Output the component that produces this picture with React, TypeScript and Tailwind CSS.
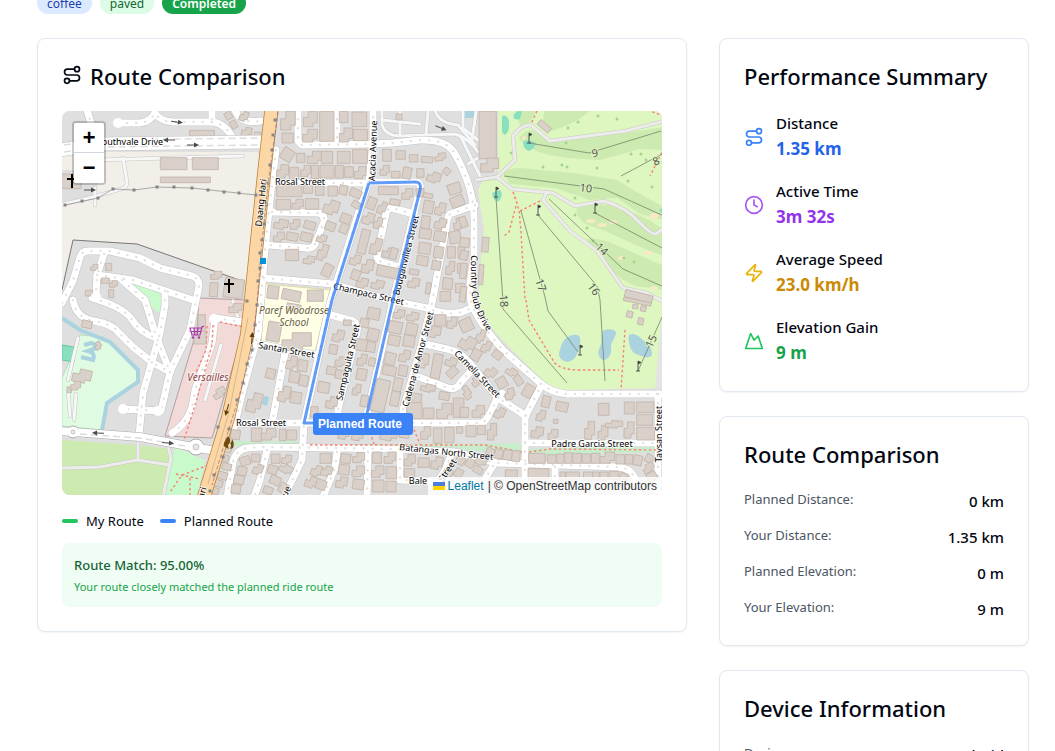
import React from 'react';
import { Clock, Mountain, Route, Zap } from 'lucide-react';

/* ---------- map data ---------- */

type Tile = { x: number; y: number; buildings: string };

// Each building: x y width height rotation corner-cut, in thirds of a pixel from the tile origin.
const tiles: Tile[] = [
  {
    x: 60,
    y: 108,
    buildings:
      '301 149 80 36 0 0;397 149 78 36 0 0;301 207 150 17 0 0;389 67 74 17 0 0;5 198 58 44 0 0;92 469 22 18 0 1;137 466 18 22 0 0;76 547 22 17 0 0;124 510 24 16 0 0;148 518 24 20 0 1;146 545 15 24 0 0;449 524 24 42 4 0;452 490 34 24 0 1;492 512 58 58 8 0;495 12 20 22 -30 0;512 38 18 24 -30 0;540 10 24 30 20 1;545 58 30 26 12 1;583 72 20 20 0 0',
  },
  {
    x: 260,
    y: 108,
    buildings:
      '62 10 44 56 0 1;66 75 34 30 0 0;130 10 42 46 0 1;128 64 44 38 0 1;179 10 43 90 0 0;238 10 26 34 0 0;276 12 44 44 0 0;238 60 40 42 0 1;280 64 42 34 0 0;64 122 36 36 32 0;109 136 26 28 0 0;142 130 44 36 0 1;184 130 34 36 0 0;232 130 38 36 0 0;278 124 44 42 0 0;50 170 36 40 0 1;88 178 28 36 0 0;122 172 30 34 0 1;154 172 22 40 0 0;180 172 42 38 0 0;226 172 24 38 0 0;254 176 26 32 0 0;284 176 34 36 0 1;' +
      '368 124 26 36 0 0;408 128 28 26 0 0;448 140 26 22 0 0;484 146 34 18 4 0;524 136 34 22 -8 1;360 172 28 30 0 1;394 190 26 20 0 0;428 178 26 34 12 0;470 182 22 26 0 0;502 192 40 32 20 1;355 236 60 24 0 0;425 242 34 32 0 1;468 242 24 24 0 0;490 256 28 14 10 0;50 232 76 34 0 0;130 232 28 24 0 0;166 234 26 28 0 0;204 234 28 30 0 0;238 232 24 28 12 0;270 244 34 24 24 0;48 274 44 32 0 0;96 274 34 30 0 1;136 272 40 32 0 0;192 276 44 44 18 1;276 280 24 20 30 0;322 268 26 36 20 0;390 274 30 18 10 0;354 280 24 38 22 1;' +
      '42 334 42 30 10 1;90 334 30 30 0 1;132 340 34 24 16 0;40 372 34 30 0 1;80 374 34 24 10 0;122 374 34 26 12 0;242 318 30 28 22 0;240 346 24 30 22 0;196 342 30 26 20 0;170 380 30 24 16 1;308 314 34 36 18 1;342 328 24 34 14 1;298 364 26 74 14 0;332 390 32 50 14 1;174 408 28 50 16 1;76 424 40 34 0 0;130 444 34 24 8 1;188 468 28 38 26 0;270 440 32 32 16 1;306 454 34 42 10 1;350 476 70 32 12 0;368 420 40 30 12 1;390 420 22 34 16 0;448 484 28 16 10 0;274 486 26 30 20 0;290 510 34 30 12 1;334 516 38 28 14 1;444 510 34 30 10 1;' +
      '490 278 30 38 10 0;526 284 30 38 12 1;484 324 26 38 8 0;524 330 34 34 14 1;478 362 36 30 8 0;522 370 36 30 10 0;476 404 36 34 8 0;522 416 28 34 8 0;470 444 34 28 10 0;516 458 26 28 10 0;550 180 20 20 40 0;564 226 38 32 -18 0;572 264 40 32 -22 0;580 330 30 34 -10 1;568 370 34 36 -10 0;562 416 24 34 0 0;594 416 20 34 0 0;558 460 26 40 4 1;592 466 20 30 0 0;548 510 30 34 6 0;586 526 28 28 0 0;22 534 34 38 6 0;66 546 56 32 12 0;142 546 48 34 0 0;408 18 18 18 0 0;540 550 32 30 0 0;498 524 14 34 10 0',
  },
  {
    x: 460,
    y: 108,
    buildings:
      '57 10 52 142 0 0;62 150 54 42 0 1;232 46 42 18 40 0;0 326 20 32 -20 0;0 390 28 28 6 0;0 428 24 28 12 0;0 466 20 46 6 0;66 388 20 44 4 0;56 470 14 60 4 0;494 554 84 22 14 0;0 536 18 46 8 0',
  },
  {
    x: 60,
    y: 300,
    buildings:
      '66 62 30 22 12 0;38 208 56 40 12 1;104 126 20 22 -30 1;22 262 12 16 0 0;32 244 30 26 0 1;414 44 22 68 0 0;402 94 36 38 0 0;506 10 40 28 0 1;458 266 40 26 -30 1;562 278 42 60 14 1;512 390 28 28 8 0;574 384 32 40 0 0;492 440 22 18 16 0;482 464 24 20 16 0;486 490 28 20 16 0;474 516 28 22 16 0;462 540 26 20 16 0;448 562 28 20 16 0;540 470 30 26 -18 0;532 500 28 26 10 0;522 526 30 26 10 0;514 554 28 26 10 0;574 462 26 24 0 0;580 492 28 32 20 1',
  },
  {
    x: 260,
    y: 300,
    buildings:
      '22 66 40 58 10 0;66 98 88 54 0 1;80 12 42 22 10 0;80 168 30 40 12 1;114 180 28 34 10 0;88 214 30 34 10 0;118 226 26 32 10 0;56 258 34 48 12 1;92 276 32 34 10 0;18 206 28 30 14 0;218 90 34 36 12 1;208 134 24 28 10 0;226 170 30 30 12 1;200 200 28 24 10 0;174 246 34 32 10 0;226 210 26 26 10 0;198 290 34 36 10 1;250 60 24 16 0 0;' +
      '322 24 38 34 12 0;300 56 26 26 12 0;288 118 34 34 10 0;322 86 34 36 14 0;320 126 26 30 10 0;292 162 28 36 10 1;290 206 30 34 10 0;326 174 20 24 12 0;278 252 24 34 10 1;302 286 22 34 10 0;400 28 34 28 10 1;440 36 36 28 12 1;386 64 40 36 12 0;438 70 34 36 12 0;384 106 36 30 12 0;430 106 34 34 10 0;374 158 32 36 14 0;418 150 32 36 12 1;368 198 40 28 12 0;416 196 26 32 10 0;340 238 42 98 13 0;400 234 26 40 12 0;392 274 26 44 12 0;' +
      '524 44 34 34 0 0;562 50 28 36 10 1;498 78 44 34 10 1;516 162 28 74 10 0;556 172 34 28 20 1;482 252 44 24 14 1;538 276 30 24 10 0;476 160 30 44 8 1;448 280 36 36 8 0;560 204 34 26 -44 0;440 308 46 48 0 0;490 324 32 32 0 0;530 310 46 46 0 1;580 294 32 58 0 0;362 380 50 42 12 1;420 384 28 30 10 0;482 380 30 38 0 1;520 384 26 46 0 0;554 382 28 46 0 0;590 380 18 20 0 0;4 386 44 34 0 1;58 388 20 34 0 0;80 390 30 30 0 0;152 320 22 32 0 0;236 378 32 40 10 1;276 388 34 34 10 1;' +
      '34 462 26 28 0 0;66 464 28 28 10 1;24 496 28 26 14 0;58 494 40 26 30 1;30 528 32 26 24 0;58 550 26 30 30 0;10 560 28 22 20 0;180 460 34 30 0 0;154 496 32 34 20 1;136 530 36 34 20 1;184 498 32 30 16 1;168 540 30 28 20 0;242 462 30 28 8 0;278 458 36 30 0 1;236 494 32 30 8 0;276 498 38 32 0 1;228 530 34 34 10 1;278 538 34 30 8 0;338 456 26 34 0 0;372 456 36 34 0 1;334 498 38 34 0 1;378 500 32 36 0 0;338 540 34 36 0 0;378 544 30 32 0 0;432 464 34 34 0 1;474 474 34 28 0 0;514 470 34 38 10 1;432 506 32 26 0 0;550 506 28 26 28 1;588 470 26 24 30 0;584 506 24 26 30 0',
  },
  {
    x: 460,
    y: 300,
    buildings:
      '0 56 38 38 -24 0;50 88 24 42 20 1;0 108 46 44 30 1;34 148 28 34 30 0;66 122 26 36 24 1;98 152 28 24 36 0;76 200 32 34 42 1;110 232 30 32 -30 0;138 204 34 24 32 1;164 226 22 30 -34 0;134 266 30 32 -14 1;190 254 30 38 30 0;34 232 26 26 -34 1;8 258 24 40 -36 1;104 322 30 34 26 1;0 322 26 30 0 0;36 316 38 36 0 1;18 376 30 34 0 0;52 376 24 28 0 0;82 370 28 50 0 1;246 288 24 34 14 0;288 306 36 28 12 0;230 330 26 34 12 1;214 380 36 34 8 1;280 358 14 12 0 0;264 388 30 30 0 1;415 310 32 36 0 0;493 306 30 36 0 0;530 306 52 32 0 0;530 344 48 32 0 0;530 382 54 38 0 0;374 364 30 54 0 1;414 376 30 44 0 1;436 362 52 22 4 1;492 366 30 48 0 1;' +
      '206 460 50 30 0 0;262 464 26 26 0 0;290 462 22 28 0 0;314 458 22 32 0 0;338 460 26 30 0 0;366 462 26 28 0 0;394 460 26 30 0 0;420 456 44 34 0 1;468 464 26 28 0 0;496 464 22 28 0 0;520 466 26 30 10 0;556 464 24 24 30 0;548 492 34 24 -30 1;562 516 28 26 -30 0;204 506 62 34 0 0;300 516 16 24 0 0;318 516 40 24 0 0;370 516 28 24 0 0;398 516 20 24 0 0;420 516 24 24 0 0;448 514 28 24 0 0;480 520 24 18 20 0;78 444 24 26 24 0;104 448 24 28 14 0;130 450 26 30 10 0;156 452 24 32 4 0;46 470 34 26 28 1;18 476 24 26 30 0;40 500 28 20 30 0;136 510 36 22 0 0;490 0 84 10 12 0;500 34 18 18 16 0;518 14 16 12 0 0;534 54 16 20 12 0;542 18 16 16 14 0;88 540 40 24 0 0',
  },
];

function buildingShape(spec: string, key: number) {
  const [x, y, w, h, r, cut] = spec.split(' ').map(Number);
  const d = cut
    ? `M${x} ${y + h * 0.4}h${w * 0.35}v${-h * 0.4}h${w * 0.65}v${h * 0.75}h${-w * 0.3}v${h * 0.25}h${-w * 0.7}z`
    : `M${x} ${y}h${w}v${h}h${-w}z`;
  return <path key={key} d={d} transform={`rotate(${r} ${x + w / 2} ${y + h / 2})`} />;
}

const streets = [
  'M270 183H369',
  'M373 108V142L369 180L330 303L304 423L302 460L284 497',
  'M298 110V141L302 145L373 144L393 143L420 140Q447 139 455 154Q474 188 474 218L474 258Q468 288 471 302Q478 322 503 350L540 383Q552 393 567 394H664',
  'M337 110V144',
  'M272 212L318 213Q325 214 324 222L315 244Q313 249 306 248L268 245',
  'M414 214L392 208Q387 208 386 214L377 256Q377 261 382 262L400 267',
  'M369 182L415 182Q421 182 420 188L393 300L367 415V423',
  'M264 278L333 284L393 301L427 308Q445 316 462 312L474 307',
  'M475 205L450 214Q447 217 446 228L432 303L420 350L403 410L402 423',
  'M327 314L353 321Q359 324 357 332L338 410V423',
  'M240 423H483Q490 416 497 398L502 393',
  'M425 344L447 349Q460 352 468 361L497 397L526 416',
  'M419 377L448 388Q456 391 461 382L474 368',
  'M525 497V417L541 386',
  'M525 443H660',
  'M227 497L233 462Q236 450 247 448L265 447L400 449L455 452L497 463L618 467Q631 468 636 480L640 497',
  'M658 394V497',
  'M337 452L335 468L323 497',
  'M368 452L367 497',
  'M400 450V480L430 481',
  'M267 450L260 480L254 497',
  'M452 453L444 472L436 484',
  'M493 466L478 490',
  'M555 467V497',
  'M258 344L316 355',
  'M285 353L272 423',
  'M276 150L270 200L264 260L261 300L258 335L243 390L234 428',
  'M118 123H140Q150 122 155 113Q160 121 172 122L213 122Q226 124 233 139',
  'M212 110V122',
  'M87 110L93 130',
  'M235 110Q240 124 261 121',
  'M62 303L73 281L80 257Q82 251 88 251L110 251L140 258L160 268L192 276Q199 278 199 286L190 330L170 372L161 411L122 409',
  'M104 254L97 275L96 296',
  'M97 275L133 280L193 300',
  'M122 280L145 300L156 336L170 372',
  'M165 291V305L160 333L143 393L139 436',
  'M73 300Q76 318 94 321Q112 324 118 332L133 347L153 363L170 372',
  'M92 298Q120 306 130 317Q140 333 156 338',
  'M243 322L215 318L212 343L195 390L193 403Q189 422 172 433',
];

const serviceRoads = [
  'M97 160L243 156',
  'M123 158L127 182Q127 188 121 189L97 196L60 205',
  'M95 188V205',
  'M382 111V125Q386 136 400 136L455 134Q470 139 478 152',
  'M400 112V134M428 112L426 134M382 120L420 124M435 110Q438 123 458 125L475 145',
  'M463 111V128L478 140M476 112L472 140M460 135L480 176M484 154L468 164M478 180L499 177',
  'M78 338L68 380M68 388L70 416M76 394L74 420',
  'M233 301L238 318M221 345L205 400',
];

const golfPaths = [
  'M498 176L515 160L513 136Q522 124 531 125L550 141L626 131L664 121',
  'M476 180L497 177L512 189L553 193L575 206L604 201Q626 207 640 223Q652 235 656 234L664 228',
  'M547 192L543 200L570 231L597 251L623 288L647 293L664 302',
  'M60 468L100 467L137 460L170 465',
  'M138 440V460',
  'M168 446L171 458L163 497',
];

const redPaths =
  'M537 111L531 124M513 192L519 210L521 232L525 300M513 192L517 202L509 232L504 236M520 211L542 200M526 300L529 320L554 362Q560 370 580 370H619M625 330L621 390M664 148L650 176M664 116L650 111M222 460L182 475L170 492M190 478V495M176 474L200 479M220 322L243 327M213 325L212 345L196 402L184 440M207 326L206 350L196 372M367 423L374 444M412 425L420 444';

const holes = [
  'M529 143L589 153L661 131',
  'M504 176L604 189L664 216',
  'M496 197L503 302L503 309L567 383',
  'M538 215L597 286L600 300L605 381',
  'M521 211L545 297L548 311L578 352',
  'M549 199L623 269L664 287',
  'M595 213L664 249',
  'M621 176L664 153',
  'M662 317L638 371',
];

const flags = [
  [529, 143],
  [496, 197],
  [538, 215],
  [595, 213],
  [580, 355],
  [638, 371],
];

const trees = [
  [578, 122], [598, 116], [568, 128], [566, 143], [511, 153], [543, 167], [562, 165], [567, 167], [597, 168],
  [631, 154], [641, 154], [646, 160], [628, 181], [652, 187], [575, 215], [587, 228], [593, 241], [624, 258],
  [634, 262], [575, 198], [617, 119],
];

const poles = [
  [65, 205], [82, 201], [98, 198], [113, 189], [134, 190], [157, 187], [174, 187], [192, 188], [208, 190],
  [224, 192], [239, 193], [256, 195],
];

const linePoles = [
  [275, 120], [273, 135], [272, 150], [270, 165], [267, 183], [266, 205], [264, 224], [262, 240], [260, 253],
  [260, 268], [258, 281], [247, 301], [257, 305], [255, 325], [252, 350], [247, 364], [243, 383], [237, 400],
  [229, 429], [218, 427], [226, 445], [223, 457], [214, 475], [210, 491],
];

const holeLabels: [string, number, number, number][] = [
  ['9', 595, 157, -10],
  ['8', 656, 165, -24],
  ['10', 586, 192, 6],
  ['14', 602, 253, 42],
  ['16', 594, 293, 55],
  ['17', 541, 289, 72],
  ['18', 504, 305, 86],
  ['15', 651, 345, -66],
];

const halo = { paintOrder: 'stroke' as const };

function StreetLabel({ x, y, r = 0, children }: { x: number; y: number; r?: number; children: string }) {
  return (
    <text
      x={x}
      y={y}
      transform={`rotate(${r} ${x} ${y})`}
      textAnchor="middle"
      fontSize="9"
      fill="#000"
      stroke="#fff"
      strokeOpacity="0.7"
      strokeWidth="2"
      style={halo}
    >
      {children}
    </text>
  );
}

function Arrow({ x, y, r = 0, color = '#4b4b4b' }: { x: number; y: number; r?: number; color?: string }) {
  return (
    <g transform={`translate(${x} ${y}) rotate(${r})`} fill={color} stroke={color}>
      <path d="M-6 0H3" strokeWidth="1" />
      <path d="M1 -2.5L6 0L1 2.5z" stroke="none" />
    </g>
  );
}

function MapDrawing() {
  return (
    <svg
      viewBox="62 111 600 384"
      preserveAspectRatio="xMidYMid slice"
      className="block size-full font-['Noto_Sans',sans-serif]"
      role="img"
      aria-label="Street map with the planned route"
    >
      <rect x="62" y="111" width="600" height="384" fill="#dfdfdf" />

      {/* land use */}
      <path d="M62 204V152H258L260 160L247 283L137 244L73 240L62 290z" fill="#f2efe9" />
      <path d="M62 170H98L97 195L62 203z" fill="#dedede" />
      <path d="M62 290L73 240L137 244L245 282" fill="none" stroke="#777" strokeWidth="1" />
      <path d="M199 298L246 300L242 335L212 438L165 436L197 330z" fill="#f2dad9" stroke="#a08484" strokeWidth="0.7" />
      <path d="M80 335L103 337L120 353L137 370V382L107 402L102 430L62 426V378L70 360z" fill="#dffce2" stroke="#9bd8a2" strokeWidth="0.6" />
      <path d="M125 280L161 291V303L146 297z" fill="#c8facc" />
      <path d="M148 298H163V316L150 306z" fill="#c8facc" />
      <path d="M62 440L138 445L171 449L163 495H62z" fill="#cdebb0" />
      <path d="M175 447L205 460L203 470L197 495H163z" fill="#c8facc" />
      <path d="M265 284L330 290L315 352L261 342z" fill="#ffffe5" stroke="#d9d68d" strokeWidth="0.7" />
      <path d="M230 441H298V446H230zM308 444H450L521 443V451H470L450 447H308zM528 449L660 444V452L528 456z" fill="#c8eccc" />
      <path d="M62 318L80 330L110 342L138 370V382L107 403L102 430" fill="none" stroke="#aad3df" strokeWidth="4" />
      <path d="M62 345L74 347V362L62 360z" fill="#88e0be" stroke="#68c39e" />
      <path d="M84 345L91 343Q97 344 94 349L88 351Q96 353 93 360L81 357" fill="none" stroke="#aad3df" strokeWidth="4" />

      {/* golf course */}
      <path
        d="M498 111H662V388L565 390Q550 388 540 378L510 348Q478 316 478 300L481 260L484 230L478 190L484 178L498 175z"
        fill="#def6c0"
      />
      <path d="M662 310V388H655z" fill="#e4e4e4" />
      <g fill="#cdebb0">
        <path d="M503 173Q510 166 530 169L573 173L617 180L640 194L664 207V220L640 214L617 198L590 200L555 188L510 184z" />
        <path d="M519 138Q528 126 536 132L550 143L626 133L664 127V150L640 149L600 160L568 158Q530 154 519 138z" />
        <path d="M576 209Q590 203 610 205Q640 212 664 230V256Q640 248 610 233L584 223Q577 217 576 209z" />
        <path d="M586 239Q600 236 625 249L664 266V290L636 286Q620 281 604 262z" />
        <path d="M545 111H590Q580 120 563 127L548 132Q540 120 545 111z" />
        <path d="M515 111H536L530 122L521 128z" />
      </g>
      <g fill="#f5e9c6">
        <ellipse cx="591" cy="221" rx="5" ry="2" />
        <ellipse cx="602" cy="225" rx="5" ry="2" />
        <ellipse cx="613" cy="222" rx="4" ry="2" />
        <ellipse cx="654" cy="216" rx="5" ry="3" />
        <ellipse cx="622" cy="258" rx="4" ry="2" />
        <ellipse cx="648" cy="253" rx="5" ry="2" />
        <ellipse cx="654" cy="288" rx="4" ry="2" />
        <ellipse cx="524" cy="138" rx="2" ry="2" />
      </g>
      <g fill="#88e0be">
        <path d="M502 116Q508 114 509 122Q510 132 505 135Q501 134 502 125z" />
        <path d="M514 114Q520 109 522 112L520 119Q512 121 514 114z" />
        <path d="M523 142Q528 138 536 143Q535 148 529 151Q523 149 523 142z" />
        <path d="M492 193L500 190Q504 195 499 201Q494 203 492 193z" />
        <path d="M659 210L664 207V216z" />
      </g>
      <g fill="#aad3df">
        <path d="M560 350C562 338 571 334 577 335C582 337 580 342 579 349C577 358 570 364 564 361C559 359 558 354 560 350z" />
        <path d="M603 331C607 328 614 329 616 332C616 338 611 341 611 347C612 356 607 360 603 360C598 358 597 352 600 347C603 341 600 336 603 331z" />
        <path d="M629 335C634 332 639 336 644 341C650 345 652 349 652 355C649 360 641 356 634 353C629 348 628 340 629 335z" />
        <rect x="464" y="111" width="11" height="7" />
        <path d="M264 396L269 397L267 406L262 404z" />
      </g>
      <g fill="#a5d58c">
        {trees.map(([x, y]) => (
          <circle key={`${x}-${y}`} cx={x} cy={y} r="1.5" />
        ))}
      </g>

      {/* roads */}
      <g fill="none" strokeLinecap="round" strokeLinejoin="round">
        {serviceRoads.map((d) => (
          <path key={d} d={d} stroke="#c4c4c4" strokeWidth="4" />
        ))}
        {serviceRoads.map((d) => (
          <path key={`f${d}`} d={d} stroke="#f7f7f7" strokeWidth="3" />
        ))}
        {golfPaths.map((d) => (
          <path key={d} d={d} stroke="#c9c9c0" strokeWidth="4" />
        ))}
        {golfPaths.map((d) => (
          <path key={`f${d}`} d={d} stroke="#ececec" strokeWidth="3" />
        ))}
        {streets.map((d) => (
          <path key={d} d={d} stroke="#c2c2c2" strokeWidth="8" />
        ))}
        {streets.map((d) => (
          <path key={`f${d}`} d={d} stroke="#fff" strokeWidth="7" />
        ))}
        {streets.map((d) => (
          <path key={`d${d}`} d={d} stroke="#e2e2e2" strokeWidth="2.4" strokeDasharray="0.1 9" />
        ))}
        <path d={redPaths} stroke="#fa8072" strokeWidth="1.4" strokeDasharray="2.5 2.5" strokeLinecap="butt" />
        <path d="M310 445H455L485 445L522 452M529 452L550 449L662 450" stroke="#fa8072" strokeWidth="1.4" strokeDasharray="2.5 2.5" strokeLinecap="butt" />
      </g>

      {/* buildings */}
      {tiles.map((tile) => (
        <g
          key={`${tile.x}-${tile.y}`}
          transform={`translate(${tile.x} ${tile.y}) scale(0.33333)`}
          fill="#d9d0c9"
          stroke="#c4b6ab"
          strokeWidth="2.6"
        >
          {tile.buildings.split(';').map(buildingShape)}
        </g>
      ))}

      {/* through roads */}
      <g fill="none" strokeLinejoin="round">
        <path d="M60 150L100 144L262 142" stroke="#c2c2c2" strokeWidth="14" />
        <path d="M60 150L100 144L264 142" stroke="#fff" strokeWidth="13" />
        <path d="M64 145L100 140L262 138M64 152L100 147L262 145" stroke="#ddd" strokeWidth="1.5" strokeDasharray="7 4" />
        <path d="M60 431L73 432L140 437L193 447L216 451" stroke="#a9a9a9" strokeWidth="9" />
        <circle cx="73" cy="432" r="6" fill="#fff" stroke="#a9a9a9" />
        <circle cx="196" cy="447" r="8" fill="#fff" stroke="#a9a9a9" />
        <path d="M60 431L73 432L140 437L193 447L216 451" stroke="#fff" strokeWidth="8" />
        <path d="M80 434L140 438L185 446" stroke="#ddd" strokeWidth="1.5" strokeDasharray="7 4" />
        <circle cx="73" cy="432" r="2" fill="#e7e7e7" stroke="#aaa" strokeWidth="0.6" />
        <circle cx="196" cy="447" r="3" fill="#e7e7e7" stroke="#aaa" strokeWidth="0.6" />
        <g fill="#fff" stroke="none">
          <circle cx="118" cy="123" r="5" />
          <circle cx="123" cy="409" r="5" />
          <circle cx="158" cy="411" r="5" />
          <circle cx="96" cy="297" r="5" />
          <circle cx="214" cy="319" r="5" />
        </g>
        <path d="M272 105L265 165L257 241L251 300L247 335L228 418L203 500" stroke="#b5812f" strokeWidth="14" />
        <path d="M272 105L265 165L257 241L251 300L247 335L228 418L203 500" stroke="#fcd6a4" strokeWidth="12.5" />
        <path d="M248 318L229 412L208 484" stroke="#bda27c" strokeWidth="0.6" />
        <path d="M278 112L268 185L261 252L257 303L252 350L238 400L228 432L212 485" stroke="#8d6c8d" strokeWidth="0.7" strokeDasharray="4 2" />
        <path d="M65 205L98 198L113 189L134 190L157 187L192 188L256 195" stroke="#888" strokeWidth="0.7" />
      </g>
      <g fill="#858585">
        {[...poles, ...linePoles].map(([x, y]) => (
          <rect key={`${x}-${y}`} x={x - 1.5} y={y - 1.5} width="3" height="3" />
        ))}
      </g>

      {/* golf holes */}
      <g fill="none" stroke="#77846a" strokeWidth="0.8">
        {holes.map((d) => (
          <path key={d} d={d} />
        ))}
      </g>
      <g fill="#444" stroke="#444" strokeWidth="0.9">
        {flags.map(([x, y]) => (
          <path key={`${x}-${y}`} d={`M${x - 2} ${y}h4M${x} ${y}v-10l3 1.5l-3 1.5`} />
        ))}
      </g>
      <g fontSize="11" fill="#555" textAnchor="middle" stroke="#def6c0" strokeWidth="2">
        {holeLabels.map(([label, x, y, r]) => (
          <text key={label} x={x} y={y} transform={`rotate(${r} ${x} ${y - 4})`} style={halo}>
            {label}
          </text>
        ))}
      </g>

      {/* points of interest */}
      <g stroke="#000" strokeWidth="2" fill="none">
        <path d="M229 279V293M224 284H234" />
        <path d="M72 174V188M67 179H77" />
      </g>
      <g fill="none" stroke="#ac39ac" strokeWidth="1.2">
        <path d="M204 326L202 327L200 335H192L190 328H202M191 331.5H201M194 328L195 335M198 328L197 335" />
        <circle cx="193" cy="337.5" r="0.7" />
        <circle cx="199" cy="337.5" r="0.7" />
      </g>
      <path d="M228 436Q232 440 229 444Q227 446 229 449Q221 446 225 441Q227 438 228 436zM232 439Q235 443 233 448L230 449Q232 445 230 443Q232 442 232 439z" fill="#734a08" />
      <rect x="260" y="258" width="6" height="6" fill="#0092da" />
      <Arrow x={177} y={122} r={8} />
      <Arrow x={169} y={140} r={180} />
      <Arrow x={193} y={145} />
      <Arrow x={90} y={190} />
      <Arrow x={441} y={128} r={22} />
      <Arrow x={98} y={433} r={182} />
      <Arrow x={168} y={443} r={4} />
      <Arrow x={252} y={338} r={-86} color="#5b3a00" />
      <Arrow x={227} y={410} r={106} color="#5b3a00" />

      {/* street names */}
      <StreetLabel x={130} y={145}>Southvale Drive</StreetLabel>
      <StreetLabel x={264} y={203} r={-84}>Daang Hari</StreetLabel>
      <StreetLabel x={200} y={511} r={-74}>Daang Hari</StreetLabel>
      <StreetLabel x={300} y={185}>Rosal Street</StreetLabel>
      <StreetLabel x={376} y={151} r={-88}>Acacia Avenue</StreetLabel>
      <StreetLabel x={409} y={256} r={-76}>Bouganvillea Street</StreetLabel>
      <StreetLabel x={368} y={297} r={13}>Champaca Street</StreetLabel>
      <StreetLabel x={351} y={363} r={-77}>Sampaguita Street</StreetLabel>
      <StreetLabel x={421} y={360} r={-75}>Cadena de Amor Street</StreetLabel>
      <StreetLabel x={286} y={353} r={10}>Santan Street</StreetLabel>
      <StreetLabel x={261} y={426}>Rosal Street</StreetLabel>
      <StreetLabel x={475} y={376} r={46}>Camella Street</StreetLabel>
      <StreetLabel x={446} y={455} r={6}>Batangas North Street</StreetLabel>
      <StreetLabel x={592} y={447}>Padre Garcia Street</StreetLabel>
      <StreetLabel x={662} y={434} r={-90}>Taysan Street</StreetLabel>
      <StreetLabel x={418} y={484}>Bale</StreetLabel>
      <StreetLabel x={450} y={472} r={-56}>Street</StreetLabel>
      <StreetLabel x={284} y={502} r={-62}>Avenue</StreetLabel>
      <path id="country-club" d="M471 255Q471 282 472 296Q475 313 490 336" fill="none" />
      <text fontSize="9" fill="#000" stroke="#fff" strokeWidth="2" strokeOpacity="0.7" style={halo}>
        <textPath href="#country-club">Country Club Drive</textPath>
      </text>
      <g fontSize="10" fontStyle="italic" textAnchor="middle" stroke="#fff" strokeOpacity="0.6" strokeWidth="2">
        <text x="294" y="314" fill="#6b6334" style={halo}>Paref Woodrose</text>
        <text x="294" y="326" fill="#6b6334" style={halo}>School</text>
        <text x="208" y="381" fill="#8b4646" style={halo}>Versailles</text>
      </g>

      {/* planned route */}
      <path
        d="M369 183L415 182Q422 182 420 190L393 300L366 418V423H304L332 300L369 183"
        fill="none"
        stroke="#3b82f6"
        strokeOpacity="0.8"
        strokeWidth="3"
        strokeLinejoin="round"
      />
    </svg>
  );
}

/* ---------- page ---------- */

function Card({ title, icon, children }: { title: string; icon?: React.ReactNode; children: React.ReactNode }) {
  return (
    <section className="rounded-lg border border-slate-200 bg-white p-6 shadow-xs">
      <h2 className="mb-6 flex h-6 items-center gap-2 text-[22px] leading-6 font-medium whitespace-nowrap text-gray-950">
        {icon}
        <span className="pt-0.5">{title}</span>
      </h2>
      {children}
    </section>
  );
}

const stats = [
  { label: 'Distance', value: '1.35 km', icon: <Route className="size-5 text-[#3b82f6]" />, color: 'text-[#2563eb]' },
  { label: 'Active Time', value: '3m 32s', icon: <Clock className="size-5 text-[#a855f7]" />, color: 'text-[#9333ea]' },
  { label: 'Average Speed', value: '23.0 km/h', icon: <Zap className="size-5 text-[#eab308]" />, color: 'text-[#ca8a04]' },
  { label: 'Elevation Gain', value: '9 m', icon: <Mountain className="size-5 text-[#22c55e]" />, color: 'text-[#16a34a]' },
];

const comparison = [
  ['Planned Distance:', '0 km'],
  ['Your Distance:', '1.35 km'],
  ['Planned Elevation:', '0 m'],
  ['Your Elevation:', '9 m'],
];

function Rows({ rows }: { rows: string[][] }) {
  return (
    <dl className="flex flex-col gap-3">
      {rows.map(([label, value]) => (
        <div key={label} className="flex justify-between">
          <dt className="text-[13px] leading-5 text-[#4b5563]">{label}</dt>
          <dd className="text-[15px] leading-6 font-medium text-gray-950">{value}</dd>
        </div>
      ))}
    </dl>
  );
}

export default function App() {
  return (
    <main className="min-h-screen overflow-hidden bg-white pr-[26px] pb-6 pl-[37px] font-['Noto_Sans','Open_Sans',sans-serif] text-gray-950">
      <div className="-mt-2 mb-6 flex gap-2 text-xs leading-4">
        <span className="rounded-full bg-[#dbeafe] px-[10px] pt-1 pb-0.5 text-[#1e40af]">coffee</span>
        <span className="rounded-full bg-[#dcfce7] px-[10px] pt-1 pb-0.5 text-[#166534]">paved</span>
        <span className="rounded-full bg-[#16a34a] px-[10px] pt-1 pb-0.5 font-semibold text-white">Completed</span>
      </div>

      <div className="grid grid-cols-[minmax(0,1fr)_310px] items-start gap-8">
        <Card title="Route Comparison" icon={<Route className="size-5" />}>
          <div className="relative h-96 overflow-hidden rounded-lg bg-gray-200">
            <MapDrawing />
            <div className="absolute top-2.5 left-2.5 flex flex-col rounded-sm border-2 border-black/20 bg-clip-padding font-['Liberation_Mono',monospace] text-[22px] leading-[34px] font-bold text-black">
              <button type="button" aria-label="Zoom in" className="h-[30px] w-[30px] rounded-t-xs border-b border-gray-300 bg-white">
                +
              </button>
              <button type="button" aria-label="Zoom out" className="h-[30px] w-[30px] rounded-b-xs bg-white">
                −
              </button>
            </div>
            <div className="absolute top-[302px] left-[251px] w-[100px] rounded-[3px] bg-[#3b82f6] px-[5px] font-['Liberation_Sans',sans-serif] text-xs leading-[22px] font-bold whitespace-nowrap text-white">
              Planned Route
            </div>
            <div className="absolute right-0 bottom-0 flex items-center gap-1 bg-white/80 px-[5px] font-['Liberation_Sans',sans-serif] text-xs leading-[18px] whitespace-nowrap text-[#333]">
              <a href="#leaflet" className="flex items-center gap-[3px] text-[#0078a8]">
                <svg viewBox="0 0 12 8" className="h-2 w-3" aria-hidden="true">
                  <path fill="#4c7be1" d="M0 0h12v4H0z" />
                  <path fill="#ffd500" d="M0 4h12v4H0z" />
                </svg>
                Leaflet
              </a>
              <span>| © OpenStreetMap contributors</span>
            </div>
          </div>

          <div className="mt-4 flex gap-4 text-[13px] leading-5">
            <span className="flex items-center gap-2">
              <span className="h-1 w-4 rounded-sm bg-[#22c55e]" />
              My Route
            </span>
            <span className="flex items-center gap-2">
              <span className="h-1 w-4 rounded-sm bg-[#3b82f6]" />
              Planned Route
            </span>
          </div>

          <div className="mt-3 rounded-lg bg-[#f0fdf4] p-3">
            <p className="text-[13px] leading-5 font-medium text-[#166534]">Route Match: 95.00%</p>
            <p className="mt-1 text-[11px] leading-4 text-[#16a34a]">Your route closely matched the planned ride route</p>
          </div>
        </Card>

        <div className="flex flex-col gap-6">
          <Card title="Performance Summary">
            <ul className="flex flex-col gap-4">
              {stats.map((stat) => (
                <li key={stat.label} className="flex items-center gap-3">
                  {stat.icon}
                  <div>
                    <p className="text-[15px] leading-6 font-medium">{stat.label}</p>
                    <p className={`text-[17px] leading-7 font-bold ${stat.color}`}>{stat.value}</p>
                  </div>
                </li>
              ))}
            </ul>
          </Card>
          <Card title="Route Comparison">
            <Rows rows={comparison} />
          </Card>
          <Card title="Device Information">
            <Rows rows={[['Device:', 'Android']]} />
          </Card>
        </div>
      </div>
    </main>
  );
}
